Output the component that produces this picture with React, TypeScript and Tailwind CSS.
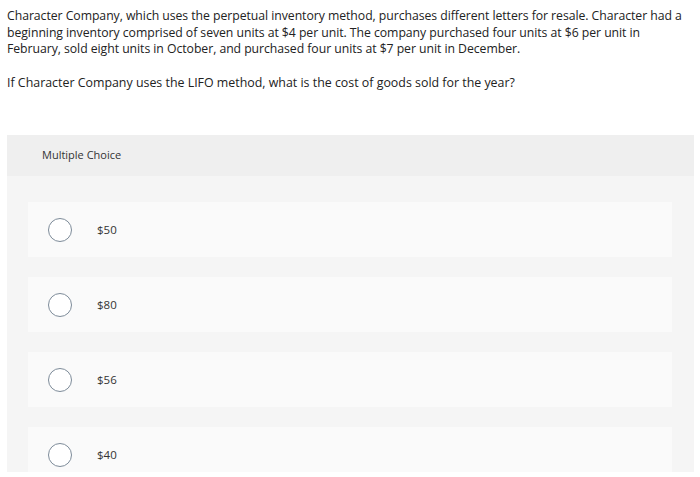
const options = ['$50', '$80', '$56', '$40'];

export default function App() {
  return (
    <div className="h-[477px] w-[700px] overflow-hidden bg-white font-['Open_Sans',sans-serif] text-[#222]">
      <div className="px-[7px] pt-[8px]">
        <p className="whitespace-nowrap text-[12.25px] leading-[16.5px] tracking-[-0.05px]">
          Character Company, which uses the perpetual inventory method, purchases different letters for resale. Character had a
          <br />
          beginning inventory comprised of seven units at $4 per unit. The company purchased four units at $6 per unit in
          <br />
          February, sold eight units in October, and purchased four units at $7 per unit in December.
        </p>
        <p className="mt-[17px] text-[12.4px] leading-[16.5px]">
          If Character Company uses the LIFO method, what is the cost of goods sold for the year?
        </p>
      </div>

      <div className="ml-[7px] mt-[44px] h-[337px] w-[687px] overflow-hidden bg-[#f5f5f5]">
        <div className="flex h-[41px] items-center bg-[#efefef] pl-[35px] text-[11px] text-[#333]">
          Multiple Choice
        </div>
        <div className="flex flex-col gap-[20px] pl-[21px] pt-[26px]">
          {options.map((opt) => (
            <div
              key={opt}
              className="flex h-[55px] w-[644px] shrink-0 items-center bg-[#fafafa] pl-[20px]"
            >
              <span className="h-[24px] w-[24px] rounded-full border-[1.5px] border-[#7d8b99] bg-white" />
              <span className="ml-[25px] text-[11.5px] text-[#333]">{opt}</span>
            </div>
          ))}
        </div>
      </div>
    </div>
  );
}
